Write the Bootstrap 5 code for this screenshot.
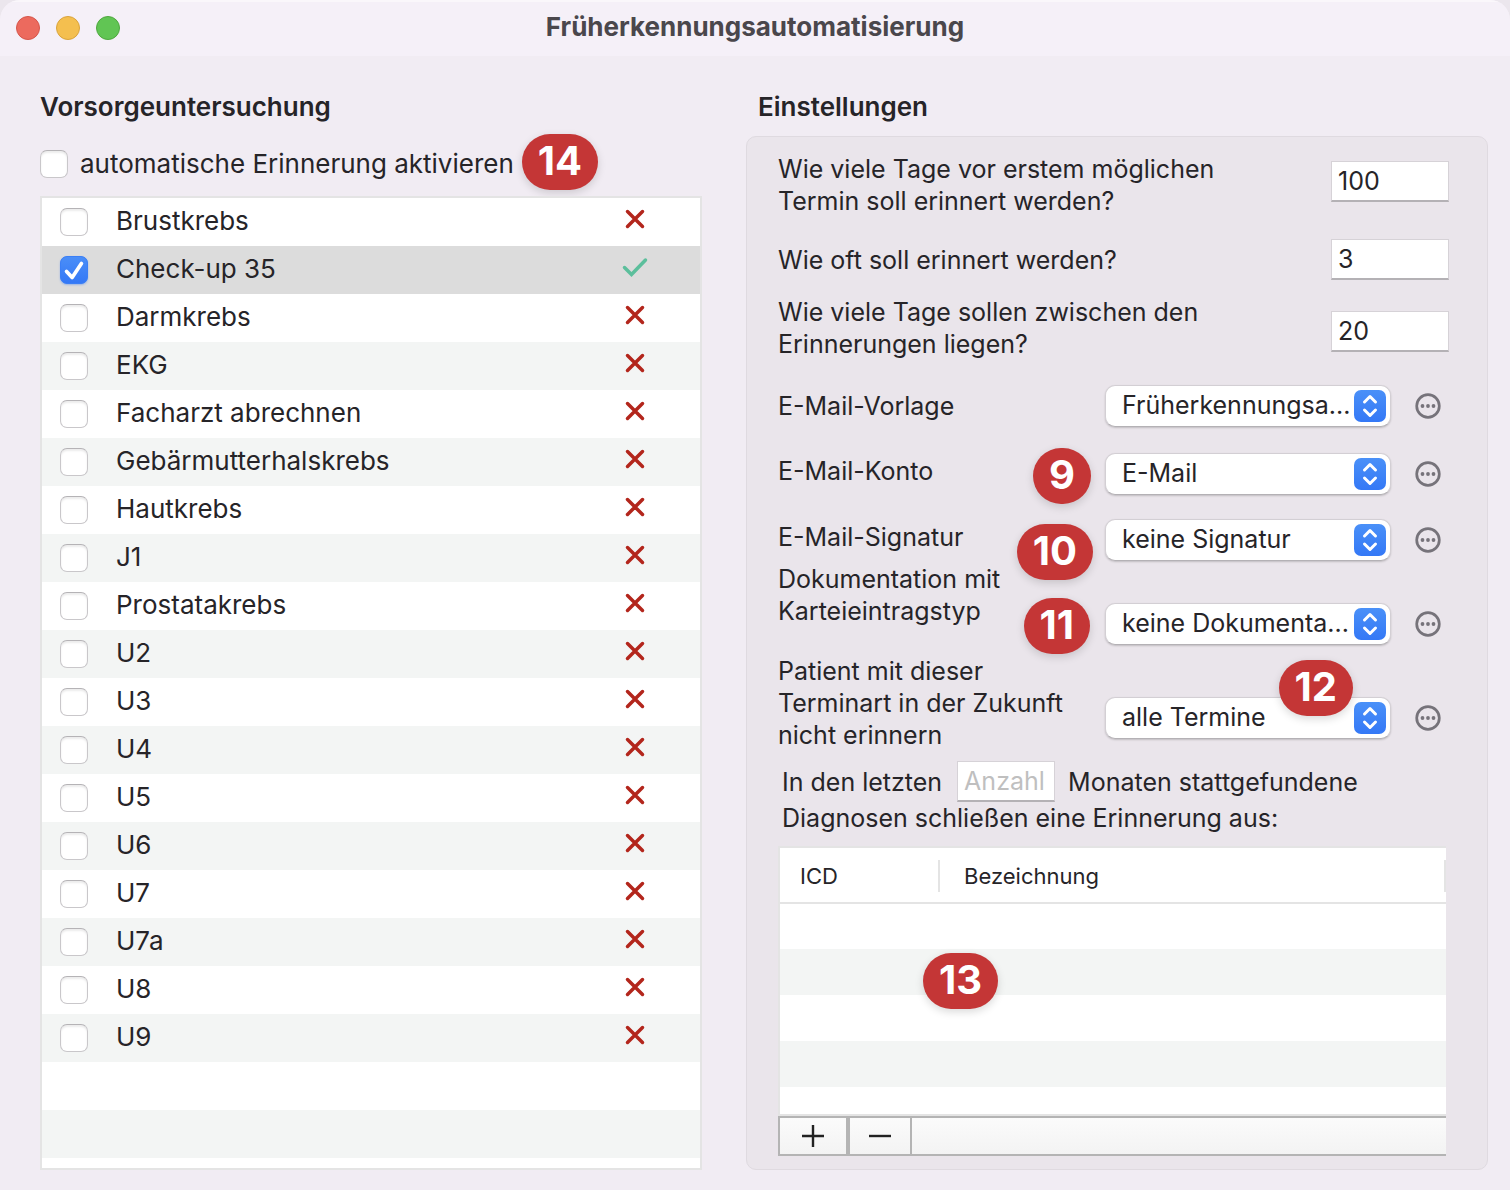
<!DOCTYPE html>
<html lang="de">
<head>
<meta charset="utf-8">
<meta name="viewport" content="width=device-width, initial-scale=1">
<title>Früherkennungsautomatisierung</title>
<link rel="stylesheet" href="https://cdn.jsdelivr.net/npm/bootstrap@5.3.0/dist/css/bootstrap.min.css">
<style>
  body { background: #ebe6ed; color: #262428; font-family: Inter, "Liberation Sans", sans-serif; font-size: 25px; line-height: 32px; }
  .app-window { min-height: 100vh; background: #f1ecf3; border-radius: 20px 20px 0 0; overflow: hidden; }
  .title-bar { height: 56px; background: #f5f0f8; padding: 0 16px; box-shadow: inset 0 2px 0 #faf7fb; }
  .title-bar h1 { font-size: 26px; line-height: 32px; font-weight: 700; color: #4a474c; padding-bottom: 2px; }
  .lights { width: 104px; }
  .light { flex: none; width: 24px; height: 24px; border-radius: 50%; border: 1px solid; padding: 0; }
  .light-close { background: #ec6a5e; border-color: #d5564b; }
  .light-min { background: #f4bf4f; border-color: #d9a33c; }
  .light-max { background: #61c554; border-color: #4fa73f; }
  .content-grid { display: grid; grid-template-columns: 662fr 742fr; column-gap: 44px; padding: 35px 22px 20px 40px; }
  .section-title { font-size: 26px; line-height: 32px; font-weight: 600; margin: 0; }
  .activate-row { height: 56px; margin: 11px 0 6px; gap: 8px; font-size: 26px; }
  .activate-row label { padding-left: 12px; }
  .mac-check.form-check-input { width: 28px; height: 28px; margin: 0; float: none; flex: none; border: 1px solid #c9c7ca; border-top-color: #b5b3b6; border-radius: 7px; background-color: #fff; box-shadow: inset 0 2px 2px #ececec; }
  .mac-check.form-check-input:checked { border-color: #3b7ff6; background-color: #3478f6; box-shadow: 0 1px 2px #3478f666;
    background-image: url("data:image/svg+xml,%3Csvg xmlns='http://www.w3.org/2000/svg' viewBox='0 0 28 28'%3E%3Cpath d='M6 15.5l6 6.5L22 7' fill='none' stroke='%23fff' stroke-width='4' stroke-linecap='round' stroke-linejoin='round'/%3E%3C/svg%3E"), linear-gradient(#4a8ef8, #3478f6); background-size: 100%; }
  .exam-list { border: 2px solid #e4e4e4; font-size: 26px; background: repeating-linear-gradient(#fff 0 48px, #f3f5f4 48px 96px); }
  .exam-list li { height: 48px; padding: 0 52px 0 18px; }
  .exam-list li.chosen { background: #dcdcdc; }
  .exam-list label { flex: 1; padding: 0 0 2px 28px; }
  .exam-list svg { width: 26px; height: 26px; margin-bottom: 6px; }
  .settings-panel { margin-top: 13px; padding: 16px 38px 13px 31px; background: #eae5eb; border: 1px solid #dfdae0; border-radius: 10px; }
  .set-row { display: flex; justify-content: space-between; }
  .set-row > .ctl { display: flex; align-items: center; justify-content: space-between; position: relative; width: 344px; padding-right: 8px; }
  .lbl-low { padding-top: 2px; }
  .lbl-high { padding-bottom: 18px; }
  .num-field { width: 118px; height: 41px; border: 1px solid #d6d2d7; border-bottom: 2px solid #b4b1b5; border-radius: 0; padding: 0 6px; font-size: 25px; line-height: 32px; background: #fff; color: inherit; }
  .num-field::placeholder { color: #bfbfbf; opacity: 1; }
  .num-field.slim { width: 98px; margin: 0 13px 0 15px; }
  .mac-select.form-select { width: 286px; height: 42px; padding: 0 38px 2px 16px; border: 1px solid #d3cfd4; border-bottom-color: #b4b1b5; border-radius: 10px; box-shadow: 0 1px 2px #0000002e; color: #262428; font-size: 25px; line-height: 36px; background-color: #fff;
    background-image: url("data:image/svg+xml,%3Csvg xmlns='http://www.w3.org/2000/svg' viewBox='0 0 32 32'%3E%3Cdefs%3E%3ClinearGradient id='g' x2='0' y2='1'%3E%3Cstop stop-color='%234a90f8'/%3E%3Cstop offset='1' stop-color='%233478f6'/%3E%3C/linearGradient%3E%3C/defs%3E%3Crect width='32' height='32' rx='7' fill='url(%23g)'/%3E%3Cpath d='M10.500 12l5.500-5.500 5.500 5.500M10.500 20l5.500 5.500 5.500-5.500' fill='none' stroke='%23fff' stroke-width='3' stroke-linecap='round' stroke-linejoin='round'/%3E%3C/svg%3E");
    background-size: 32px 32px; background-position: right 4px center; }
  .more-btn { width: 26px; height: 26px; padding: 0; border: 0; display: flex; }
  .num-badge { display: inline-block; flex: none; min-width: 56px; height: 56px; padding: 0 16px; border-radius: 28px; background: #c43636; color: #fff; font-size: 40px; line-height: 54px; font-weight: 700; text-align: center; box-shadow: 0 3px 8px #00000026; }
  .over { position: absolute; z-index: 2; }
  .over-9 { top: -5px; right: 358px; }
  .over-10 { top: 5px; right: 356px; }
  .over-11 { top: -5px; right: 359px; }
  .over-12 { top: -37px; right: 96px; }
  .over-13 { top: 105px; left: 143px; }
  .gap-a { margin-top: 22px; }
  .gap-b { margin-top: 25px; }
  .gap-c { margin-top: 10px; }
  .gap-d { margin-top: 2px; }
  .gap-e { margin-top: 26px; }
  .icd-box { position: relative; margin: 12px 3px 0 0; border: 2px solid #e4e4e4; border-right: 0; height: 270px; background: #fff; }
  .icd-table { table-layout: fixed; margin: 0; font-size: 22px; color: inherit; }
  .icd-table th { padding: 12px 0 10px; border-bottom: 2px solid #e4e4e4; font-weight: 400; background: #fff; color: inherit; }
  .icd-table th span { display: block; border-right: 2px solid #e4e4e4; padding-left: 20px; }
  .icd-table th + th span { padding-left: 24px; }
  .icd-table .col-icd { width: 160px; }
  .icd-table td { height: 46px; padding: 0; border: 0; background: #fff; }
  .icd-table tr:nth-child(even) td { background: #f3f5f4; }
  .tool-strip { margin-right: 3px; height: 40px; border: 2px solid #b4b4b4; border-right: 0; background: linear-gradient(#fbfbfb, #f3f3f3); }
  .tool-strip button { border: 0; border-right: 2px solid #b4b4b4; background: none; padding: 0; color: #222; display: flex; align-items: center; justify-content: center; }
  .tool-add { width: 70px; }
  .tool-strip .tool-add { border-right-width: 4px; }
  .tool-remove { width: 62px; }
</style>
<script src="https://cdn.jsdelivr.net/npm/bootstrap@5.3.0/dist/js/bootstrap.bundle.min.js"></script>
</head>
<body>
<svg class="d-none" aria-hidden="true">
  <symbol id="cross" viewBox="0 0 26 26"><path d="M5.500 5.500l15 15M20.500 5.500l-15 15" fill="none" stroke="#b3261c" stroke-width="3.500" stroke-linecap="round"/></symbol>
  <symbol id="tick" viewBox="0 0 26 26"><path d="M2.500 13.500l7 7L23.500 6" fill="none" stroke="#5cbf9c" stroke-width="3.500" stroke-linecap="round"/></symbol>
  <symbol id="dots" viewBox="0 0 26 26"><circle cx="13" cy="13" r="11.300" fill="none" stroke="#76737a" stroke-width="2.700"/><g fill="#76737a"><circle cx="7.500" cy="13" r="1.900"/><circle cx="13" cy="13" r="1.900"/><circle cx="18.500" cy="13" r="1.900"/></g></symbol>
</svg>
<div class="app-window d-flex flex-column">
  <header class="title-bar d-flex align-items-center">
    <div class="lights d-flex gap-3">
      <button class="light light-close" aria-label="Schließen"></button>
      <button class="light light-min" aria-label="Minimieren"></button>
      <button class="light light-max" aria-label="Maximieren"></button>
    </div>
    <h1 class="m-0 flex-grow-1 text-center">Früherkennungsautomatisierung</h1>
    <div class="lights"></div>
  </header>

  <main class="content-grid flex-grow-1">
    <section class="d-flex flex-column">
      <h2 class="section-title">Vorsorgeuntersuchung</h2>
      <div class="activate-row d-flex align-items-center">
        <div class="d-flex align-items-center pt-1">
          <input class="form-check-input mac-check" type="checkbox" id="auto">
          <label for="auto">automatische Erinnerung aktivieren</label>
        </div>
        <span class="num-badge">14</span>
      </div>
      <ul class="exam-list list-unstyled m-0 flex-grow-1" id="exams"></ul>
    </section>

    <section class="d-flex flex-column">
      <h2 class="section-title ps-2 ms-1">Einstellungen</h2>
      <form class="settings-panel flex-grow-1">
        <div class="set-row align-items-start">
          <label for="days">Wie viele Tage vor erstem möglichen<br>Termin soll erinnert werden?</label>
          <div class="pt-2"><input class="num-field d-block" id="days" type="text" value="100"></div>
        </div>
        <div class="set-row align-items-center gap-a">
          <label for="times">Wie oft soll erinnert werden?</label>
          <input class="num-field" id="times" type="text" value="3">
        </div>
        <div class="set-row align-items-end mt-3">
          <label for="between">Wie viele Tage sollen zwischen den<br>Erinnerungen liegen?</label>
          <div class="pb-2"><input class="num-field d-block" id="between" type="text" value="20"></div>
        </div>
        <div class="set-row align-items-center gap-b">
          <label for="tpl">E-Mail-Vorlage</label>
          <div class="ctl">
            <select class="form-select mac-select" id="tpl"><option>Früherkennungsa...</option></select>
            <button type="button" class="btn more-btn" aria-label="Mehr"><svg width="26" height="26"><use href="#dots"/></svg></button>
          </div>
        </div>
        <div class="set-row align-items-start gap-e">
          <label for="acc" class="lbl-low">E-Mail-Konto</label>
          <div class="ctl">
            <span class="num-badge over over-9">9</span>
            <select class="form-select mac-select" id="acc"><option>E-Mail</option></select>
            <button type="button" class="btn more-btn" aria-label="Mehr"><svg width="26" height="26"><use href="#dots"/></svg></button>
          </div>
        </div>
        <div class="set-row align-items-start mt-4">
          <label for="sig" class="lbl-low">E-Mail-Signatur</label>
          <div class="ctl">
            <span class="num-badge over over-10">10</span>
            <select class="form-select mac-select" id="sig"><option>keine Signatur</option></select>
            <button type="button" class="btn more-btn" aria-label="Mehr"><svg width="26" height="26"><use href="#dots"/></svg></button>
          </div>
        </div>
        <div class="set-row align-items-end gap-d">
          <label for="doc" class="lbl-high">Dokumentation mit<br>Karteieintragstyp</label>
          <div class="ctl">
            <span class="num-badge over over-11">11</span>
            <select class="form-select mac-select" id="doc"><option>keine Dokumenta...</option></select>
            <button type="button" class="btn more-btn" aria-label="Mehr"><svg width="26" height="26"><use href="#dots"/></svg></button>
          </div>
        </div>
        <div class="set-row align-items-end gap-c">
          <label for="appt">Patient mit dieser<br>Terminart in der Zukunft<br>nicht erinnern</label>
          <div class="ctl mb-2 pb-1">
            <span class="num-badge over over-12">12</span>
            <select class="form-select mac-select" id="appt"><option>alle Termine</option></select>
            <button type="button" class="btn more-btn" aria-label="Mehr"><svg width="26" height="26"><use href="#dots"/></svg></button>
          </div>
        </div>
        <div class="ps-1 gap-c">
          <div class="d-flex align-items-center"><label for="months">In den letzten</label><input class="num-field slim" id="months" type="text" placeholder="Anzahl"><span>Monaten stattgefundene</span></div>
          <div>Diagnosen schließen eine Erinnerung aus:</div>
        </div>
        <div class="icd-box">
          <span class="num-badge over over-13">13</span>
          <table class="table icd-table">
            <thead><tr><th class="col-icd" scope="col"><span>ICD</span></th><th scope="col"><span>Bezeichnung</span></th></tr></thead>
            <tbody><tr><td></td><td></td></tr><tr><td></td><td></td></tr><tr><td></td><td></td></tr><tr><td></td><td></td></tr></tbody>
          </table>
        </div>
        <div class="tool-strip d-flex">
          <button type="button" class="tool-add" aria-label="Hinzufügen"><svg width="22" height="22" viewBox="0 0 22 22" stroke="currentColor" stroke-width="2.400"><path d="M0 11h22M11 0v22"/></svg></button>
          <button type="button" class="tool-remove" aria-label="Entfernen"><svg width="22" height="22" viewBox="0 0 22 22" stroke="currentColor" stroke-width="2.400"><path d="M0 11h22"/></svg></button>
        </div>
      </form>
    </section>
  </main>
</div>
<script>
  const exams = ["Brustkrebs", "Check-up 35", "Darmkrebs", "EKG", "Facharzt abrechnen", "Gebärmutterhalskrebs", "Hautkrebs", "J1", "Prostatakrebs", "U2", "U3", "U4", "U5", "U6", "U7", "U7a", "U8", "U9"];
  document.getElementById("exams").innerHTML = exams.map((name, i) => {
    const on = name === "Check-up 35";
    return `<li class="d-flex align-items-center${on ? " chosen" : ""}">
      <input class="form-check-input mac-check" type="checkbox" id="exam${i}"${on ? " checked" : ""}>
      <label for="exam${i}">${name}</label>
      <svg role="img" aria-label="${on ? "aktiv" : "inaktiv"}"><use href="#${on ? "tick" : "cross"}"/></svg></li>`;
  }).join("");
</script>
</body>
</html>
